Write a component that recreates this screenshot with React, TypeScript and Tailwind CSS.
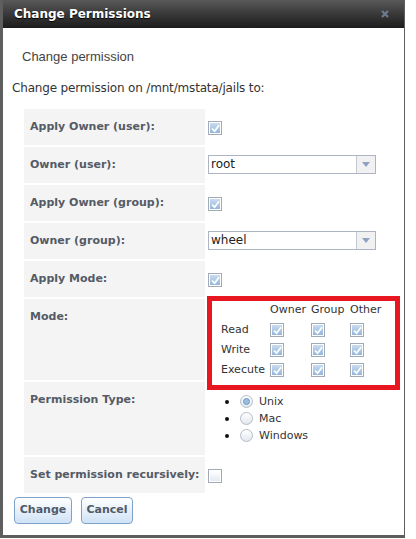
import React from 'react';

const font = { fontFamily: '"DejaVu Sans", Verdana, sans-serif' };

function Check({ checked = true }: { checked?: boolean }) {
  return (
    <span className="flex h-[14px] w-[14px] border border-[#a2aab6] bg-white p-[1px]">
      <span
        className={
          'flex flex-1 items-center justify-center ' +
          (checked
            ? 'bg-gradient-to-b from-[#cadcf0] to-[#93b6dc]'
            : 'bg-gradient-to-b from-[#ffffff] to-[#e4eaf1]')
        }
      >
        {checked && (
          <svg width="9" height="9" viewBox="0 0 9 9">
            <path d="M1 4.6 L3.6 7.2 L8 1.2" fill="none" stroke="#ffffff" strokeWidth="1.7" />
          </svg>
        )}
      </span>
    </span>
  );
}

function Radio({ checked = false }: { checked?: boolean }) {
  return (
    <span className="flex h-[13px] w-[13px] items-center justify-center rounded-full border border-[#b4bcc8] bg-gradient-to-b from-[#ffffff] to-[#e3e8ee]">
      {checked && <span className="h-[7px] w-[7px] rounded-full border border-[#6f99c8] bg-[#9dbde0]" />}
    </span>
  );
}

function Select({ value }: { value: string }) {
  return (
    <div className="flex h-[19px] w-[168px] border border-[#aeb5c2] bg-white">
      <span className="flex-1 pl-[2px] text-[12px] leading-[17px] text-[#222]">{value}</span>
      <span className="flex w-[19px] items-center justify-center border-l border-[#c3c9d2] bg-[#f1f1f1]">
        <svg width="8" height="5" viewBox="0 0 8 5">
          <path d="M0 0 H8 L4 5 Z" fill="#8ea3c2" />
        </svg>
      </span>
    </div>
  );
}

function Label({ text, h }: { text: string; h: string }) {
  return (
    <div
      className={
        'whitespace-nowrap bg-[#f4f4f4] pl-[6px] pt-[11px] text-[11px] font-bold leading-[14px] text-[#545b66] ' + h
      }
    >
      {text}
    </div>
  );
}

export default function App() {
  return (
    <div className="h-[539px] w-[416px] overflow-hidden bg-white" style={font}>
      <div className="flex h-[538px] w-[405px] flex-col border-b-[3px] border-l-[3px] border-r border-[#5e5e5e] bg-white">
        <div className="flex h-[28px] items-center justify-between bg-gradient-to-b from-[#595959] to-[#1c1c1c] pl-[11px] pr-[14px]">
          <span className="text-[12px] font-bold text-white [text-shadow:0_1px_1px_#000]">Change Permissions</span>
          <svg width="10" height="10" viewBox="0 0 10 10">
            <path d="M2 2 L8 8 M8 2 L2 8" stroke="#6d7b8f" strokeWidth="2.2" />
          </svg>
        </div>

        <div
          className="mt-[21px] pl-[19px] text-[13px] leading-[16px] text-[#444]"
          style={{ fontFamily: '"Liberation Sans", Arial, sans-serif' }}
        >
          Change permission
        </div>
        <div className="mt-[15px] pl-[9px] text-[12px] leading-[16px] tracking-[-0.17px] text-[#333]">
          Change permission on /mnt/mstata/jails to:
        </div>

        <div className="ml-[21px] mt-[13px] grid grid-cols-[181px_1fr] gap-x-[2px] gap-y-[2px]">
          <Label text="Apply Owner (user):" h="h-[36px]" />
          <div className="pl-[1px] pt-[12px]">
            <Check />
          </div>

          <Label text="Owner (user):" h="h-[36px]" />
          <div className="pl-[1px] pt-[8px]">
            <Select value="root" />
          </div>

          <Label text="Apply Owner (group):" h="h-[36px]" />
          <div className="pl-[1px] pt-[12px]">
            <Check />
          </div>

          <Label text="Owner (group):" h="h-[36px]" />
          <div className="pl-[1px] pt-[8px]">
            <Select value="wheel" />
          </div>

          <Label text="Apply Mode:" h="h-[36px]" />
          <div className="pl-[1px] pt-[12px]">
            <Check />
          </div>

          <Label text="Mode:" h="h-[81px]" />
          <div className="relative pl-[14px] pt-[1px]">
            <div className="grid grid-cols-[49px_41px_39px_auto] text-[11px] leading-[20px] text-[#333]">
              <span />
              <span>Owner</span>
              <span>Group</span>
              <span>Other</span>
              {['Read', 'Write', 'Execute'].map((r) => (
                <React.Fragment key={r}>
                  <span>{r}</span>
                  <span className="flex items-center">
                    <Check />
                  </span>
                  <span className="flex items-center">
                    <Check />
                  </span>
                  <span className="flex items-center">
                    <Check />
                  </span>
                </React.Fragment>
              ))}
            </div>
            <div className="absolute left-0 top-[-3px] z-10 h-[94px] w-[193px] border-[5px] border-[#e8161f]" />
          </div>

          <Label text="Permission Type:" h="h-[73px]" />
          <div className="pt-[11px] text-[11px] leading-[17px] text-[#333]">
            {[
              ['Unix', true],
              ['Mac', false],
              ['Windows', false],
            ].map(([t, c]) => (
              <div key={t as string} className="flex items-center">
                <span className="ml-[18px] h-[4px] w-[4px] rounded-full bg-[#111]" />
                <span className="ml-[11px]">
                  <Radio checked={c as boolean} />
                </span>
                <span className="ml-[6px]">{t as string}</span>
              </div>
            ))}
          </div>

          <Label text="Set permission recursively:" h="h-[36px]" />
          <div className="pl-[1px] pt-[12px]">
            <Check checked={false} />
          </div>
        </div>

        <div className="ml-[11px] mt-[4px] flex gap-[9px]">
          <button className="h-[27px] w-[58px] rounded-[4px] border border-[#7fa3c8] bg-gradient-to-b from-[#ffffff] to-[#cfe2f6] text-[11px] font-bold text-[#505a68]">
            Change
          </button>
          <button className="h-[27px] w-[52px] rounded-[4px] border border-[#7fa3c8] bg-gradient-to-b from-[#ffffff] to-[#cfe2f6] text-[11px] font-bold text-[#505a68]">
            Cancel
          </button>
        </div>
      </div>
    </div>
  );
}
